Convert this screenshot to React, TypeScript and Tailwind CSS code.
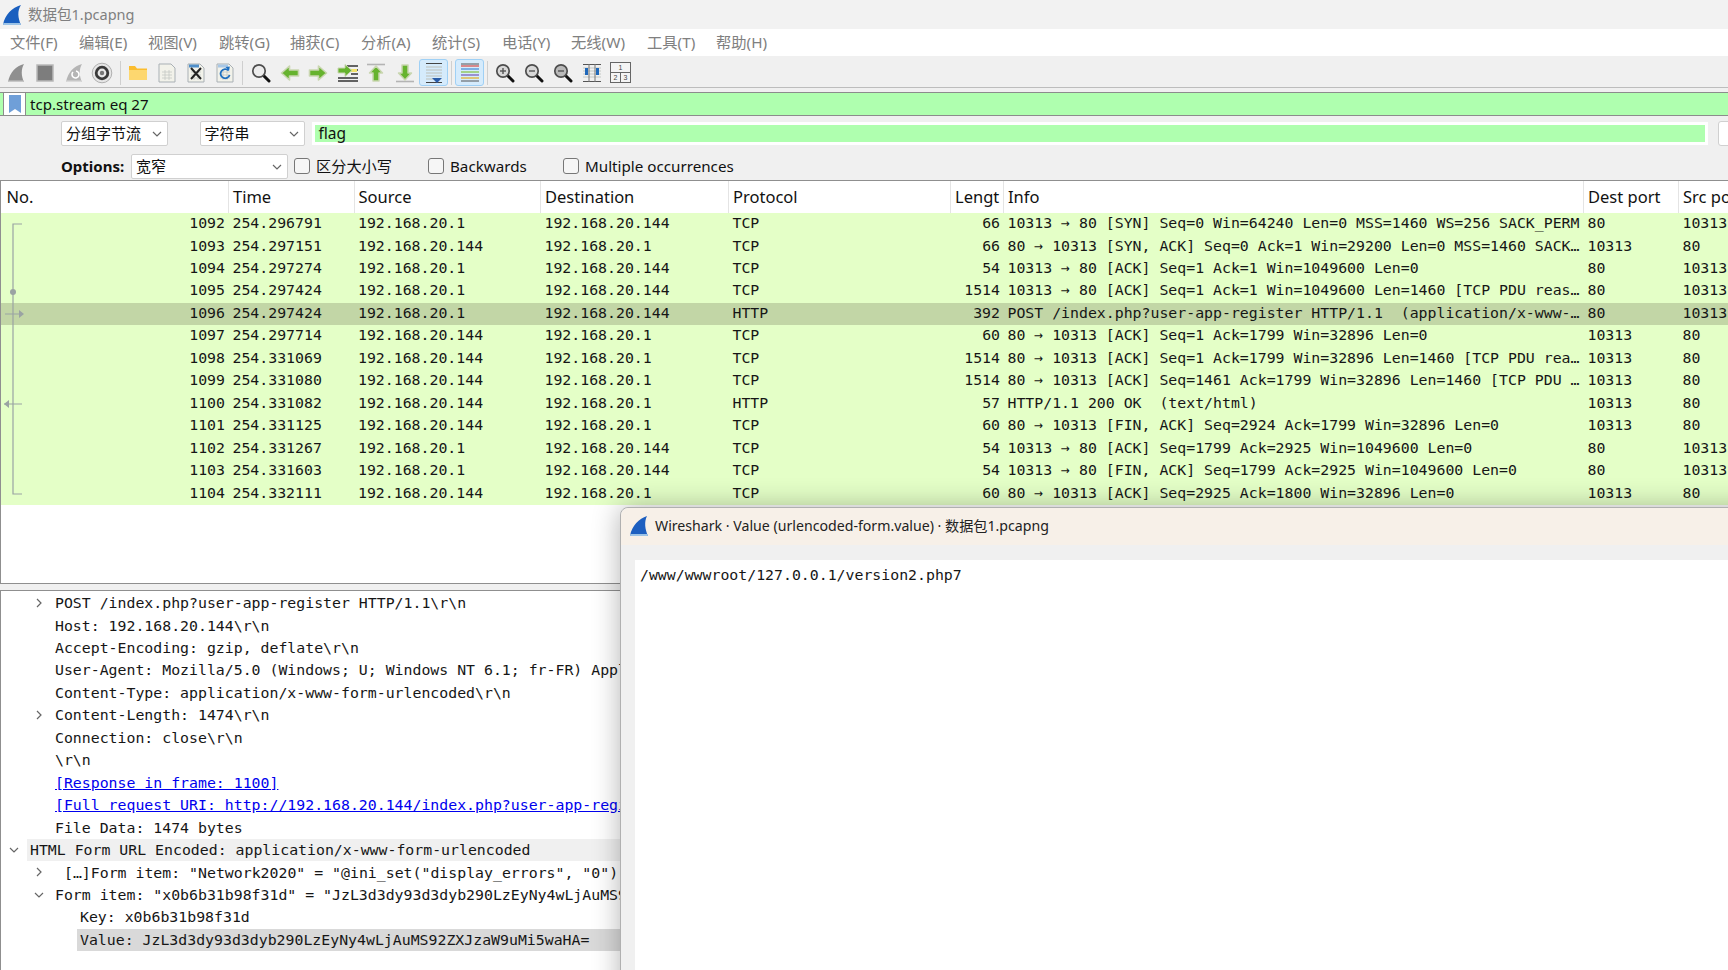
import type { ReactNode } from "react";

const uiFont = "font-['Noto_Sans','Noto_Sans_CJK_SC',sans-serif]";
const monoFont = "font-['DejaVu_Sans_Mono',monospace]";

const menus = [
  { label: "文件(F)", w: "w-[69px]" },
  { label: "编辑(E)", w: "w-[69px]" },
  { label: "视图(V)", w: "w-[71px]" },
  { label: "跳转(G)", w: "w-[71px]" },
  { label: "捕获(C)", w: "w-[71px]" },
  { label: "分析(A)", w: "w-[71px]" },
  { label: "统计(S)", w: "w-[70px]" },
  { label: "电话(Y)", w: "w-[69px]" },
  { label: "无线(W)", w: "w-[76px]" },
  { label: "工具(T)", w: "w-[69px]" },
  { label: "帮助(H)", w: "w-[69px]" },
];

const columns = [
  { label: "No.", w: "w-[228px]" },
  { label: "Time", w: "w-[125.5px]" },
  { label: "Source", w: "w-[186.5px]" },
  { label: "Destination", w: "w-[188px]" },
  { label: "Protocol", w: "w-[222px]" },
  { label: "Lengt", w: "w-[53px]" },
  { label: "Info", w: "w-[580px]" },
  { label: "Dest port", w: "w-[95px]" },
  { label: "Src port", w: "w-[50px]" },
];

const A = "192.168.20.1";
const B = "192.168.20.144";

const packets = [
  ["1092", "254.296791", A, B, "TCP", "66", "10313 → 80 [SYN] Seq=0 Win=64240 Len=0 MSS=1460 WS=256 SACK_PERM", "80", "10313"],
  ["1093", "254.297151", B, A, "TCP", "66", "80 → 10313 [SYN, ACK] Seq=0 Ack=1 Win=29200 Len=0 MSS=1460 SACK…", "10313", "80"],
  ["1094", "254.297274", A, B, "TCP", "54", "10313 → 80 [ACK] Seq=1 Ack=1 Win=1049600 Len=0", "80", "10313"],
  ["1095", "254.297424", A, B, "TCP", "1514", "10313 → 80 [ACK] Seq=1 Ack=1 Win=1049600 Len=1460 [TCP PDU reas…", "80", "10313"],
  ["1096", "254.297424", A, B, "HTTP", "392", "POST /index.php?user-app-register HTTP/1.1  (application/x-www-…", "80", "10313"],
  ["1097", "254.297714", B, A, "TCP", "60", "80 → 10313 [ACK] Seq=1 Ack=1799 Win=32896 Len=0", "10313", "80"],
  ["1098", "254.331069", B, A, "TCP", "1514", "80 → 10313 [ACK] Seq=1 Ack=1799 Win=32896 Len=1460 [TCP PDU rea…", "10313", "80"],
  ["1099", "254.331080", B, A, "TCP", "1514", "80 → 10313 [ACK] Seq=1461 Ack=1799 Win=32896 Len=1460 [TCP PDU …", "10313", "80"],
  ["1100", "254.331082", B, A, "HTTP", "57", "HTTP/1.1 200 OK  (text/html)", "10313", "80"],
  ["1101", "254.331125", B, A, "TCP", "60", "80 → 10313 [FIN, ACK] Seq=2924 Ack=1799 Win=32896 Len=0", "10313", "80"],
  ["1102", "254.331267", A, B, "TCP", "54", "10313 → 80 [ACK] Seq=1799 Ack=2925 Win=1049600 Len=0", "80", "10313"],
  ["1103", "254.331603", A, B, "TCP", "54", "10313 → 80 [FIN, ACK] Seq=1799 Ack=2925 Win=1049600 Len=0", "80", "10313"],
  ["1104", "254.332111", B, A, "TCP", "60", "80 → 10313 [ACK] Seq=2925 Ack=1800 Win=32896 Len=0", "10313", "80"],
];

type DetailRow = {
  text: string;
  pad: string;
  chevron?: "right" | "down";
  chevronPad?: string;
  link?: boolean;
};

const details: DetailRow[] = [
  { text: "POST /index.php?user-app-register HTTP/1.1\\r\\n", pad: "pl-[54px]", chevron: "right", chevronPad: "left-[32px]" },
  { text: "Host: 192.168.20.144\\r\\n", pad: "pl-[54px]" },
  { text: "Accept-Encoding: gzip, deflate\\r\\n", pad: "pl-[54px]" },
  { text: "User-Agent: Mozilla/5.0 (Windows; U; Windows NT 6.1; fr-FR) AppleWebKit", pad: "pl-[54px]" },
  { text: "Content-Type: application/x-www-form-urlencoded\\r\\n", pad: "pl-[54px]" },
  { text: "Content-Length: 1474\\r\\n", pad: "pl-[54px]", chevron: "right", chevronPad: "left-[32px]" },
  { text: "Connection: close\\r\\n", pad: "pl-[54px]" },
  { text: "\\r\\n", pad: "pl-[54px]" },
  { text: "[Response in frame: 1100]", pad: "pl-[54px]", link: true },
  { text: "[Full request URI: http://192.168.20.144/index.php?user-app-register]", pad: "pl-[54px]", link: true },
  { text: "File Data: 1474 bytes", pad: "pl-[54px]" },
  { text: "HTML Form URL Encoded: application/x-www-form-urlencoded", pad: "ml-[26px] pl-[3px] bg-[#f0f0f0]", chevron: "down", chevronPad: "left-[7px]" },
  { text: "[…]Form item: \"Network2020\" = \"@ini_set(\"display_errors\", \"0\");", pad: "pl-[63px]", chevron: "right", chevronPad: "left-[32px]" },
  { text: "Form item: \"x0b6b31b98f31d\" = \"JzL3d3dy93d3dyb290LzEyNy4wLjAuMS92ZXJz", pad: "pl-[54px]", chevron: "down", chevronPad: "left-[32px]" },
  { text: "Key: x0b6b31b98f31d", pad: "pl-[79px]" },
  { text: "Value: JzL3d3dy93d3dyb290LzEyNy4wLjAuMS92ZXJzaW9uMi5waHA=", pad: "ml-[76px] pl-[3px] bg-[#d9d9d9]" },
];

function Fin({ fill = "#8f8f8f", tail = "#c8c8c8", children }: { fill?: string; tail?: string; children?: ReactNode }) {
  return (
    <svg width="20" height="20" viewBox="0 0 20 20">
      <path d="M18 1C10 3 4 9 2 19h16C15 13 15 6 18 1Z" fill={fill} />
      <path d="M2.4 17.5 2 19h16l-.6-1.5Z" fill={tail} />
      {children}
    </svg>
  );
}

function Page({ children }: { children?: ReactNode }) {
  return (
    <svg width="20" height="20" viewBox="0 0 20 20">
      <path d="M2 1h12l4 4v14H2Z" fill="#f2f2ea" stroke="#a9b0b5" />
      <path d="M5 9h10M5 12h10M5 15h10M8 7v10M12 7v10" stroke="#c5c9c5" strokeWidth=".8" />
      {children}
    </svg>
  );
}

function Lens({ mark, lens = "#d8d8d8" }: { mark?: "plus" | "minus"; lens?: string }) {
  return (
    <svg width="20" height="20" viewBox="0 0 20 20">
      <path d="m12 12 6 6" stroke="#111" strokeWidth="3" strokeLinecap="round" />
      <circle cx="8" cy="8" r="6.200" fill={lens} stroke="#4d4d4d" strokeWidth="1.700" />
      {mark && <path d="M5 8h6" stroke="#555" strokeWidth="1.400" />}
      {mark === "plus" && <path d="M8 5v6" stroke="#555" strokeWidth="1.400" />}
    </svg>
  );
}

function GreenArrow({ rotate = 0 }: { rotate?: number }) {
  return (
    <svg width="20" height="20" viewBox="0 0 20 20">
      <g transform={`rotate(${rotate} 10 10)`}>
        <path d="M1.500 10 9.500 3v4h9v6h-9v4Z" fill="#66b32e" stroke="#c9d6b0" strokeWidth="1.600" strokeLinejoin="round" />
      </g>
    </svg>
  );
}

function VArrow({ up }: { up?: boolean }) {
  return (
    <svg width="20" height="20" viewBox="0 0 20 20">
      <path d={up ? "M1 1.500h18" : "M1 18.500h18"} stroke="#b4b4b4" strokeWidth="1.600" />
      <g transform={up ? undefined : "rotate(180 10 10)"}>
        <path d="M10 3 3.500 10H7v8h6v-8h3.500Z" fill="#66b32e" stroke="#c9d6b0" strokeWidth="1.500" strokeLinejoin="round" />
      </g>
    </svg>
  );
}

const lineStops = [3, 6, 9, 12, 15];

const toolbarIcons: (ReactNode | "sep")[] = [
  <Fin key="start" />,
  <svg key="stop" width="20" height="20" viewBox="0 0 20 20">
    <rect x="2" y="2" width="16" height="16" fill="#7d7d7d" stroke="#b8b8b8" strokeWidth="1.500" />
  </svg>,
  <Fin key="restart" fill="#b5b5b5" tail="#dadada">
    <path d="M12 8a3.500 3.500 0 1 1-3 1" fill="none" stroke="#fff" strokeWidth="1.600" />
  </Fin>,
  <svg key="gear" width="22" height="22" viewBox="0 0 22 22">
    <circle cx="11" cy="11" r="9.800" fill="#e6e6e6" stroke="#b0b0b0" />
    <circle cx="11" cy="11" r="7.200" fill="#3a3a3a" />
    <circle cx="11" cy="11" r="4.400" fill="#e8e8e8" />
    <circle cx="11" cy="11" r="2.200" fill="#777" />
  </svg>,
  "sep",
  <svg key="folder" width="20" height="20" viewBox="0 0 20 20">
    <path d="M1 3h6l2 2.500h10V17H1Z" fill="#fbbd2f" />
    <path d="M1 7h18v10H1Z" fill="#fdd76f" />
  </svg>,
  <Page key="file" />,
  <Page key="close">
    <path d="M3 1.500h10v3H3Z" fill="#4f8ec9" />
    <path d="m5 5 10 11M15 5 5 16" stroke="#222" strokeWidth="2" />
  </Page>,
  <Page key="reload">
    <path d="M3 1.500h10v3H3Z" fill="#a8c7e6" />
    <path d="M13.500 7.500A4.600 4.600 0 1 0 14.600 12" fill="none" stroke="#1f6fc0" strokeWidth="1.800" />
    <path d="m10.500 4 3.500 4 .8-4.500Z" fill="#1f6fc0" />
  </Page>,
  "sep",
  <Lens key="find" lens="#ececec" />,
  <GreenArrow key="back" />,
  <GreenArrow key="forward" rotate={180} />,
  <svg key="goto" width="21" height="20" viewBox="0 0 21 20">
    <path d="M10 3h11M14 7h7M14 11h7M1 15h20M1 18h20" stroke="#333" strokeWidth="1.300" />
    <path d="M13 6h7v3h-7Z" fill="#f2e26a" />
    <path d="M15 7.500 8 1.500V5H1v5h7v3.500Z" fill="#66b32e" stroke="#c9d6b0" />
  </svg>,
  <VArrow key="first" up />,
  <VArrow key="last" />,
  "auto",
  "sep",
  "color",
  "sep",
  <Lens key="zoomin" mark="plus" />,
  <Lens key="zoomout" mark="minus" />,
  <Lens key="zoomreset" mark="minus" lens="#b9b9b9" />,
  <svg key="resize" width="20" height="20" viewBox="0 0 20 20">
    <path d="M1 1.500h18M1 18.500h18" stroke="#555" strokeWidth="1.100" />
    <path d="M1 5h18M1 8h18M1 11h18M1 14h18" stroke="#c4c8c4" strokeWidth="1.100" />
    <path d="M7 1v18M13 1v18" stroke="#777" />
    <path d="M3 5h3v7H3ZM14 5h3v7h-3Z" fill="#1f68ba" />
  </svg>,
  <svg key="layout" width="21" height="21" viewBox="0 0 21 21">
    <rect x=".5" y=".5" width="20" height="20" fill="#f4f4f4" stroke="#666" />
    <path d="M.5 10.500h20M10.500 10.500v10" stroke="#666" />
    <text x="10.500" y="8" fontSize="7" textAnchor="middle" fill="#444" fontFamily="Liberation Sans">1</text>
    <text x="5.500" y="18" fontSize="7" textAnchor="middle" fill="#444" fontFamily="Liberation Sans">2</text>
    <text x="15.500" y="18" fontSize="7" textAnchor="middle" fill="#444" fontFamily="Liberation Sans">3</text>
  </svg>,
];

function Toolbar() {
  return (
    <div className="flex h-[32px] items-center border-b border-[#bdbdbd] bg-[#f0f0f0] pl-[1.5px] pt-[2px]">
      {toolbarIcons.map((icon, i) => {
        if (icon === "sep") return <div key={i} className="mx-[3px] h-[24px] w-px bg-[#cfcfcf]" />;
        if (icon === "auto")
          return (
            <div key={i} className="flex h-[27px] w-[28.850px] items-center justify-center rounded-[3px] border border-[#9fd0f5] bg-[#d5ebfc]">
              <svg width="20" height="22" viewBox="0 0 20 22">
                <path d="M2 1.500h16M2 20.500h16" stroke="#444" strokeWidth="1.200" />
                <path d="M2 5h16M2 8h16M2 11h16M2 14h16M2 17h8" stroke="#bdbfb8" strokeWidth="1.200" />
                <path d="M8 16h10l-5 5Z" fill="#2a5da8" />
              </svg>
            </div>
          );
        if (icon === "color")
          return (
            <div key={i} className="flex h-[27px] w-[28.850px] items-center justify-center rounded-[3px] border border-[#9fd0f5] bg-[#d5ebfc]">
              <svg width="20" height="20" viewBox="0 0 20 20">
                {lineStops.map((y, n) => (
                  <path key={y} d={`M1 ${y}h18`} stroke={["#d9534f", "#4c8fd6", "#8ac24a", "#7a5fb8", "#e0b030"][n]} strokeWidth="1.300" />
                ))}
                <path d="M1 1h18M1 18h18" stroke="#555" strokeWidth="1.100" />
              </svg>
            </div>
          );
        return (
          <div key={i} className="flex h-[27px] w-[28.850px] items-center justify-center">
            {icon}
          </div>
        );
      })}
    </div>
  );
}

function Chevron({ down }: { down?: boolean }) {
  return (
    <svg width="12" height="12" viewBox="0 0 12 12" fill="none" stroke="#666" strokeWidth="1.200">
      <path d={down ? "m2 4 4 4 4-4" : "m4 2 4 4-4 4"} />
    </svg>
  );
}

function Combo({ label, w }: { label: string; w: string }) {
  return (
    <div className={`flex h-[25px] shrink-0 items-center justify-between rounded-[2px] border border-[#d0d0d0] bg-white pl-[4px] pr-[4px] text-[15px] text-[#111] ${w}`}>
      <span>{label}</span>
      <Chevron down />
    </div>
  );
}

function Check({ label, ml, w }: { label: string; ml: string; w: string }) {
  return (
    <div className={`flex items-center text-[15.200px] text-[#111] ${ml} ${w}`}>
      <div className="mr-[6px] h-[16px] w-[16px] rounded-[3px] border border-[#777] bg-[#f6f6f6]" />
      {label}
    </div>
  );
}

function FrameTree() {
  return (
    <svg className="absolute left-0 top-0" width="30" height="292" viewBox="0 0 30 292" fill="none" stroke="#9aa3a3" strokeWidth="1.200">
      <path d="M21 11h-9v270h9" />
      <circle cx="12" cy="79" r="3" fill="#9aa3a3" stroke="none" />
      <path d="M4 101h16M3 191h18" />
      <path d="m18 97 5 4-5 4ZM8 187l-5 4 5 4Z" fill="#9aa3a3" stroke="none" />
    </svg>
  );
}

function PacketList() {
  return (
    <div className={`relative h-[292px] ${monoFont} text-[14.850px] text-[#161616]`}>
      {packets.map((row, r) => (
        <div key={row[0]} className={`flex h-[22.460px] items-center whitespace-pre pb-[2px] ${r === 4 ? "bg-[#c2d6a6]" : "bg-[#e4ffc7]"}`}>
          {row.map((cell, c) => (
            <div
              key={c}
              className={`shrink-0 overflow-hidden ${columns[c].w} ${c === 0 || c === 5 ? "pr-[4px] text-right" : "pl-[3.500px]"}`}
            >
              {cell}
            </div>
          ))}
        </div>
      ))}
      <FrameTree />
    </div>
  );
}

function Details() {
  return (
    <div className={`${monoFont} mt-[1px] text-[14.850px] text-[#161616]`}>
      {details.map((row) => (
        <div key={row.text} className="relative flex h-[22.460px] items-center whitespace-pre">
          {row.chevron && (
            <div className={`absolute top-[5px] ${row.chevronPad}`}>
              <Chevron down={row.chevron === "down"} />
            </div>
          )}
          <div className={`flex h-full w-[1400px] items-center ${row.pad}`}>
            <span className={row.link ? "text-[#0000ee] underline" : ""}>{row.text}</span>
          </div>
        </div>
      ))}
    </div>
  );
}

function ValueWindow() {
  return (
    <div className="absolute left-[620px] top-[507px] h-[520px] w-[1200px] rounded-tl-[8px] border border-[#b0b0b0] bg-[#f0f0f0] shadow-[0_0_28px_rgba(0,0,0,0.3)]">
      <div className="flex h-[37px] items-center rounded-tl-[8px] bg-[#f7f0e8] pb-[2px] pl-[8px] text-[14.150px] text-[#222]">
        <svg width="20" height="20" viewBox="0 0 20 20">
          <path d="M18 0C10 3 3 9 1 20h18C16 13 15 6 18 0Z" fill="#1d5fc0" />
          <path d="M1.400 18 1 20h18l-.6-2Z" fill="#9cc3e6" />
        </svg>
        <span className="ml-[6px]">Wireshark · Value (urlencoded-form.value) · 数据包1.pcapng</span>
      </div>
      <div className={`ml-[14px] mt-[15px] h-[420px] bg-white pl-[5px] pt-[4px] ${monoFont} text-[14.850px] text-[#161616]`}>
        /www/wwwroot/127.0.0.1/version2.php7
      </div>
    </div>
  );
}

export default function App() {
  return (
    <div className={`relative h-[970px] w-[1728px] overflow-hidden bg-[#f0f0f0] ${uiFont}`}>
      <div className="flex h-[29px] items-center bg-[#f2f2f2] pl-[2px] text-[14.500px] text-[#808080]">
        <svg width="20" height="20" viewBox="0 0 20 20">
          <path d="M19 0C10 3 3 9 1 20h18C16 13 15 6 19 0Z" fill="#1a5fbf" />
          <path d="M1.400 18 1 20h18l-.6-2Z" fill="#9cc3e6" />
        </svg>
        <span className="ml-[6px]">数据包1.pcapng</span>
      </div>
      <div className="flex h-[27px] items-center bg-white pl-[10px] text-[15.300px] text-[#808080]">
        {menus.map((m) => (
          <div key={m.label} className={m.w}>
            {m.label}
          </div>
        ))}
      </div>
      <Toolbar />

      <div className="mt-[4px] flex h-[24px] items-stretch border-y border-[#8c8c8c] bg-[#afffaf] text-[15.100px] text-[#111]">
        <div className="ml-[3px] flex w-[23px] items-center justify-center border-x border-[#8c8c8c] bg-white">
          <svg width="12" height="18" viewBox="0 0 12 18">
            <path d="M0 0h12v18l-6-4-6 4Z" fill="#6f9fd8" />
          </svg>
        </div>
        <span className="ml-[4px] leading-[22px]">tcp.stream eq 27</span>
      </div>

      <div className="mt-[5px] flex items-center pl-[61px]">
        <Combo label="分组字节流" w="w-[107px]" />
        <Combo label="字符串" w="ml-[31.500px] w-[105.500px]" />
        <div className="ml-[6.500px] flex h-[23px] w-[1396px] shrink-0 items-center border-[3px] border-white bg-[#afffaf] pl-[4px] text-[15.500px] text-[#111]">
          flag
        </div>
        <div className="ml-[10px] h-[25px] w-[30px] shrink-0 rounded-[3px] border border-[#d0d0d0] bg-white" />
      </div>

      <div className="mt-[8px] flex h-[25px] items-center pl-[61px] text-[15px]">
        <span className="w-[70px] font-bold text-[#111]">Options:</span>
        <Combo label="宽窄" w="w-[157px]" />
        <Check label="区分大小写" ml="ml-[6px]" w="w-[134px]" />
        <Check label="Backwards" ml="" w="w-[135px]" />
        <Check label="Multiple occurrences" ml="" w="w-[180px]" />
      </div>

      <div className="mt-px h-[404px] border-y border-l border-[#8f8f8f] bg-white">
        <div className="flex h-[32px] items-center bg-white text-[16.500px] text-[#111]">
          {columns.map((col, i) => (
            <div key={col.label} className={`flex h-full shrink-0 items-center overflow-hidden whitespace-nowrap border-r border-[#e4e4e4] ${i === 0 ? "pl-[5.500px]" : "pl-[4px]"} ${col.w}`}>
              {col.label}
            </div>
          ))}
        </div>
        <PacketList />
      </div>

      <div className="mt-[6px] h-[400px] overflow-hidden border-l border-t border-[#8f8f8f] bg-white">
        <Details />
      </div>

      <ValueWindow />
    </div>
  );
}
